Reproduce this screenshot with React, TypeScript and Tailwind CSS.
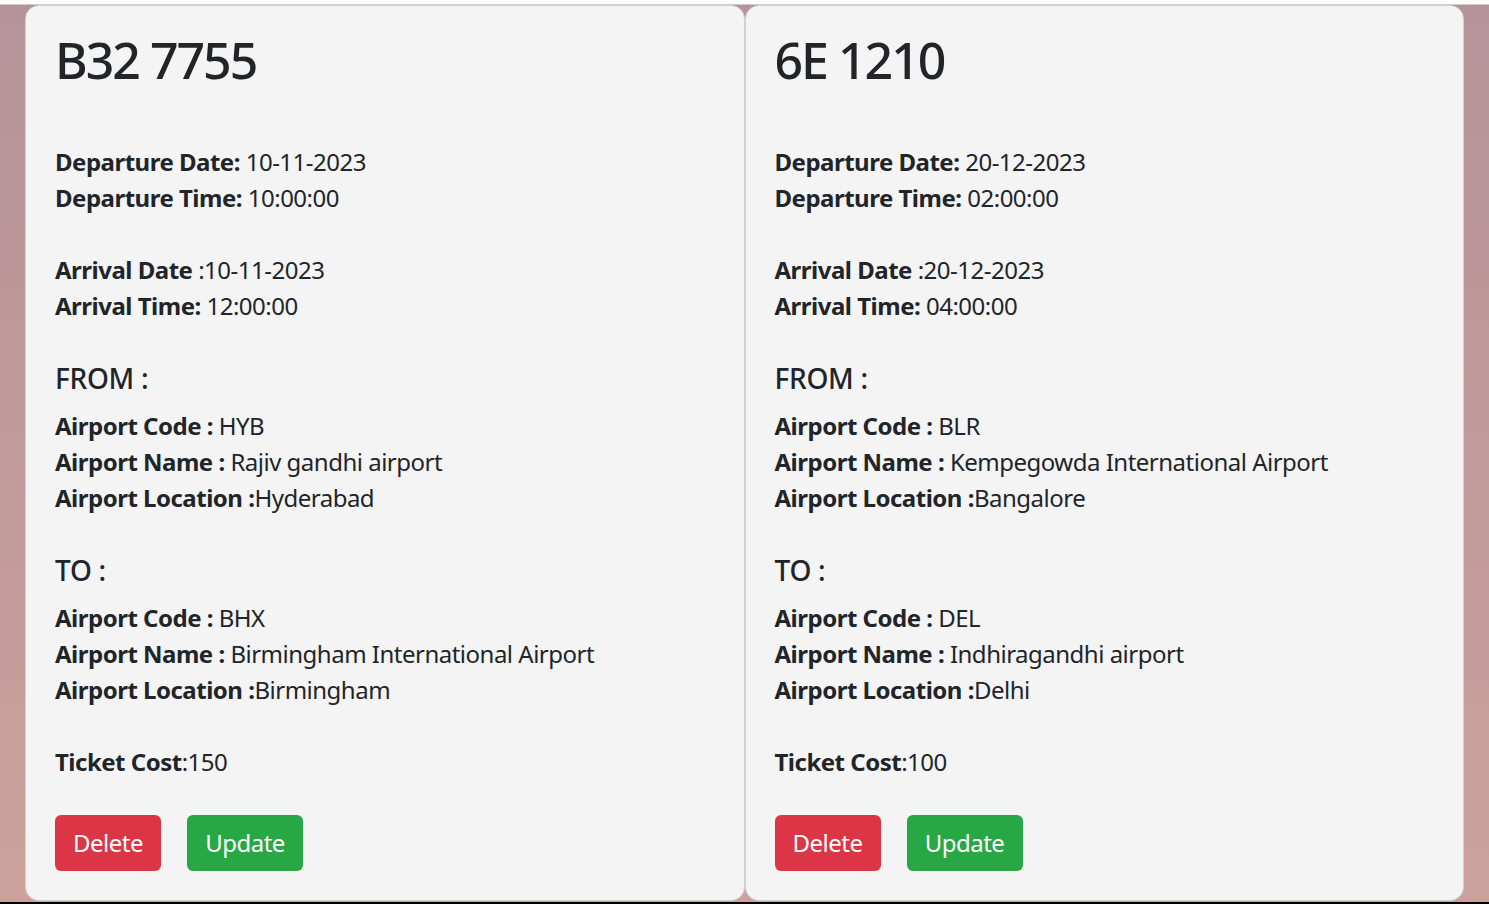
import React from "react";

type Airport = { code: string; name: string; location: string };

type Flight = {
  number: string;
  depDate: string;
  depTime: string;
  arrDate: string;
  arrTime: string;
  from: Airport;
  to: Airport;
  cost: number;
};

const flights: Flight[] = [
  {
    number: "B32 7755",
    depDate: "10-11-2023",
    depTime: "10:00:00",
    arrDate: "10-11-2023",
    arrTime: "12:00:00",
    from: { code: "HYB", name: "Rajiv gandhi airport", location: "Hyderabad" },
    to: { code: "BHX", name: "Birmingham International Airport", location: "Birmingham" },
    cost: 150,
  },
  {
    number: "6E 1210",
    depDate: "20-12-2023",
    depTime: "02:00:00",
    arrDate: "20-12-2023",
    arrTime: "04:00:00",
    from: { code: "BLR", name: "Kempegowda International Airport", location: "Bangalore" },
    to: { code: "DEL", name: "Indhiragandhi airport", location: "Delhi" },
    cost: 100,
  },
];

const font = { fontFamily: '"Segoe UI", "Noto Sans", "Open Sans", sans-serif' };

const AirportBlock = ({ title, airport }: { title: string; airport: Airport }) => (
  <div className="mt-[36px]">
    <h4 className="h-[36px] text-[28px] leading-[36px] mb-[12px] font-medium tracking-[-0.3px]">{title}</h4>
    <div className="leading-[36px]">
      <div>
        <b>Airport Code : </b>
        {airport.code}
      </div>
      <div>
        <b>Airport Name : </b>
        {airport.name}
      </div>
      <div>
        <b>Airport Location :</b>
        {airport.location}
      </div>
    </div>
  </div>
);

const FlightCard = ({ f }: { f: Flight }) => (
  <div className="flex-1 bg-[#f4f4f4] border border-[#d2d2d2] rounded-[14px] pt-[24px] pl-[29px] pb-[29px] text-[#212529] text-[24px] tracking-[-0.5px]">
    <h1 className="text-[50px] leading-[61px] font-medium tracking-[-2px]">{f.number}</h1>

    <div className="mt-[53px] leading-[36px]">
      <div>
        <b>Departure Date:</b> {f.depDate}
      </div>
      <div>
        <b>Departure Time:</b> {f.depTime}
      </div>
    </div>

    <div className="mt-[36px] leading-[36px]">
      <div>
        <b>Arrival Date</b> :{f.arrDate}
      </div>
      <div>
        <b>Arrival Time:</b> {f.arrTime}
      </div>
    </div>

    <AirportBlock title="FROM :" airport={f.from} />
    <AirportBlock title="TO :" airport={f.to} />

    <div className="mt-[36px] leading-[36px]">
      <b>Ticket Cost</b>:{f.cost}
    </div>

    <div className="mt-[35px] flex gap-[26px]">
      <button className="w-[106px] h-[56px] rounded-[6px] bg-[#dc3545] text-white text-[24px] leading-[36px]">
        Delete
      </button>
      <button className="w-[116px] h-[56px] rounded-[6px] bg-[#28a745] text-white text-[24px] leading-[36px]">
        Update
      </button>
    </div>
  </div>
);

export default function App() {
  return (
    <div className="w-[1489px] h-[904px] overflow-hidden flex flex-col bg-white" style={font}>
      <div className="h-[5px] bg-white border-b border-[#cbcbcb] shrink-0" />
      <div className="flex-1 bg-gradient-to-b from-[#b5939a] to-[#cba29b] px-[25px] flex items-start overflow-hidden">
        <div className="flex w-full">
          {flights.map((f) => (
            <FlightCard key={f.number} f={f} />
          ))}
        </div>
      </div>
      <div className="h-[2px] bg-black shrink-0" />
    </div>
  );
}
